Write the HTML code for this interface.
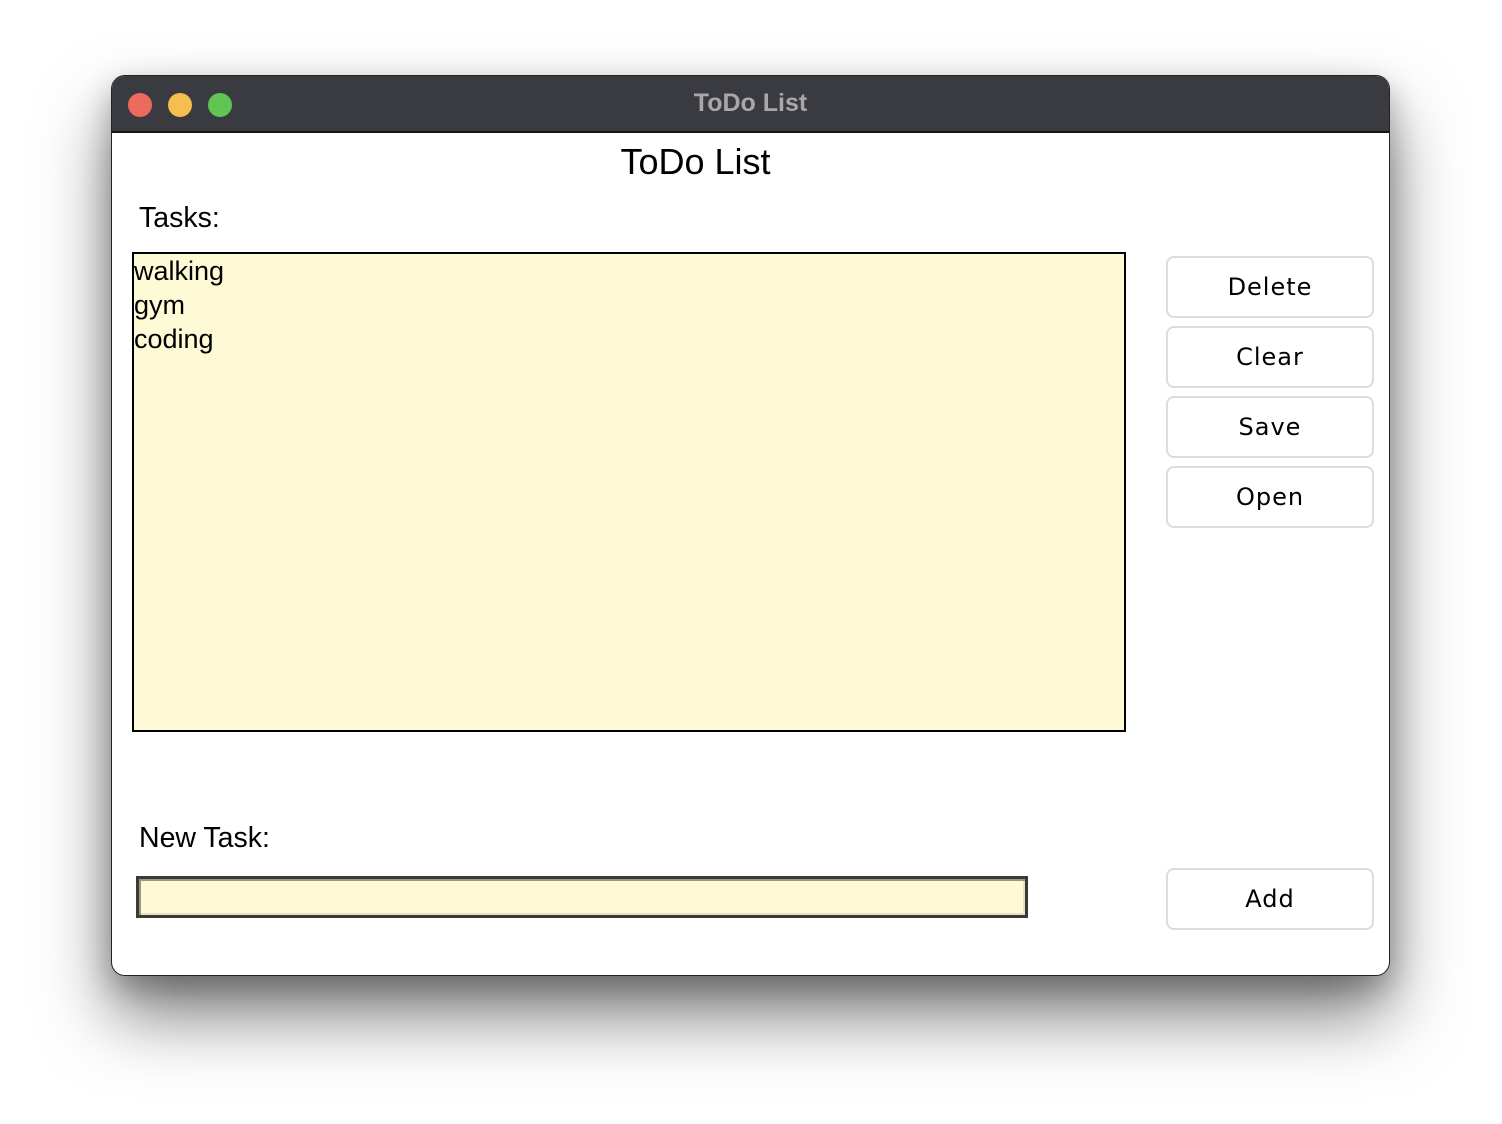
<!DOCTYPE html>
<html><head><meta charset="utf-8"><style>
*{margin:0;padding:0;box-sizing:border-box}
html,body{width:1502px;height:1124px;background:#fff;overflow:hidden;font-family:"Liberation Sans",sans-serif}
.win{position:absolute;left:111px;top:75px;width:1279px;height:901px;border-radius:14px;background:#fff;border:1px solid #222;overflow:hidden;box-shadow:0 40px 70px rgba(0,0,0,.5),0 12px 30px rgba(0,0,0,.25)}
.tb{position:absolute;left:0;top:0;width:100%;height:57px;background:#3a3b40;border-bottom:2px solid #151515}
.dot{position:absolute;top:17px;width:24px;height:24px;border-radius:50%}
.tt{position:absolute;left:0;right:0;top:13px;text-align:center;color:#a8a8aa;font-weight:bold;font-size:25px}
.abs{position:absolute;color:#000}
.btn{position:absolute;left:1054px;width:208px;height:62px;border:2px solid #dcdcdc;border-radius:8px;text-align:center;line-height:58px;font-size:24px;font-family:"Comic Sans MS","DejaVu Sans",sans-serif;letter-spacing:1px}
</style></head><body>
<div class="win">
 <div class="tb">
  <div class="dot" style="left:16px;background:#ed6a5e"></div>
  <div class="dot" style="left:56px;background:#f5bf4f"></div>
  <div class="dot" style="left:96px;background:#61c554"></div>
  <div class="tt">ToDo List</div>
 </div>
 <div class="abs" style="left:0;right:0;top:65px;text-align:center;font-size:36px;padding-right:110px">ToDo List</div>
 <div class="abs" style="left:27px;top:126px;font-size:28.5px">Tasks:</div>
 <div class="abs" style="left:20px;top:176px;width:994px;height:480px;background:#fefad5;border:2px solid #000;font-size:27px;line-height:34px;padding-top:0px">walking<br>gym<br>coding</div>
 <div class="abs" style="left:27px;top:746px;font-size:28.5px">New Task:</div>
 <div class="abs" style="left:24px;top:800px;width:892px;height:42px;background:#fefad5;border:3px solid #3a3a3a;box-shadow:inset 2px 2px 0 #9a9680,inset -2px -2px 0 #e6e2bc"></div>
 <div class="btn" style="top:180px">Delete</div>
 <div class="btn" style="top:250px">Clear</div>
 <div class="btn" style="top:320px">Save</div>
 <div class="btn" style="top:390px">Open</div>
 <div class="btn" style="top:792px">Add</div>
</div>
</body></html>
